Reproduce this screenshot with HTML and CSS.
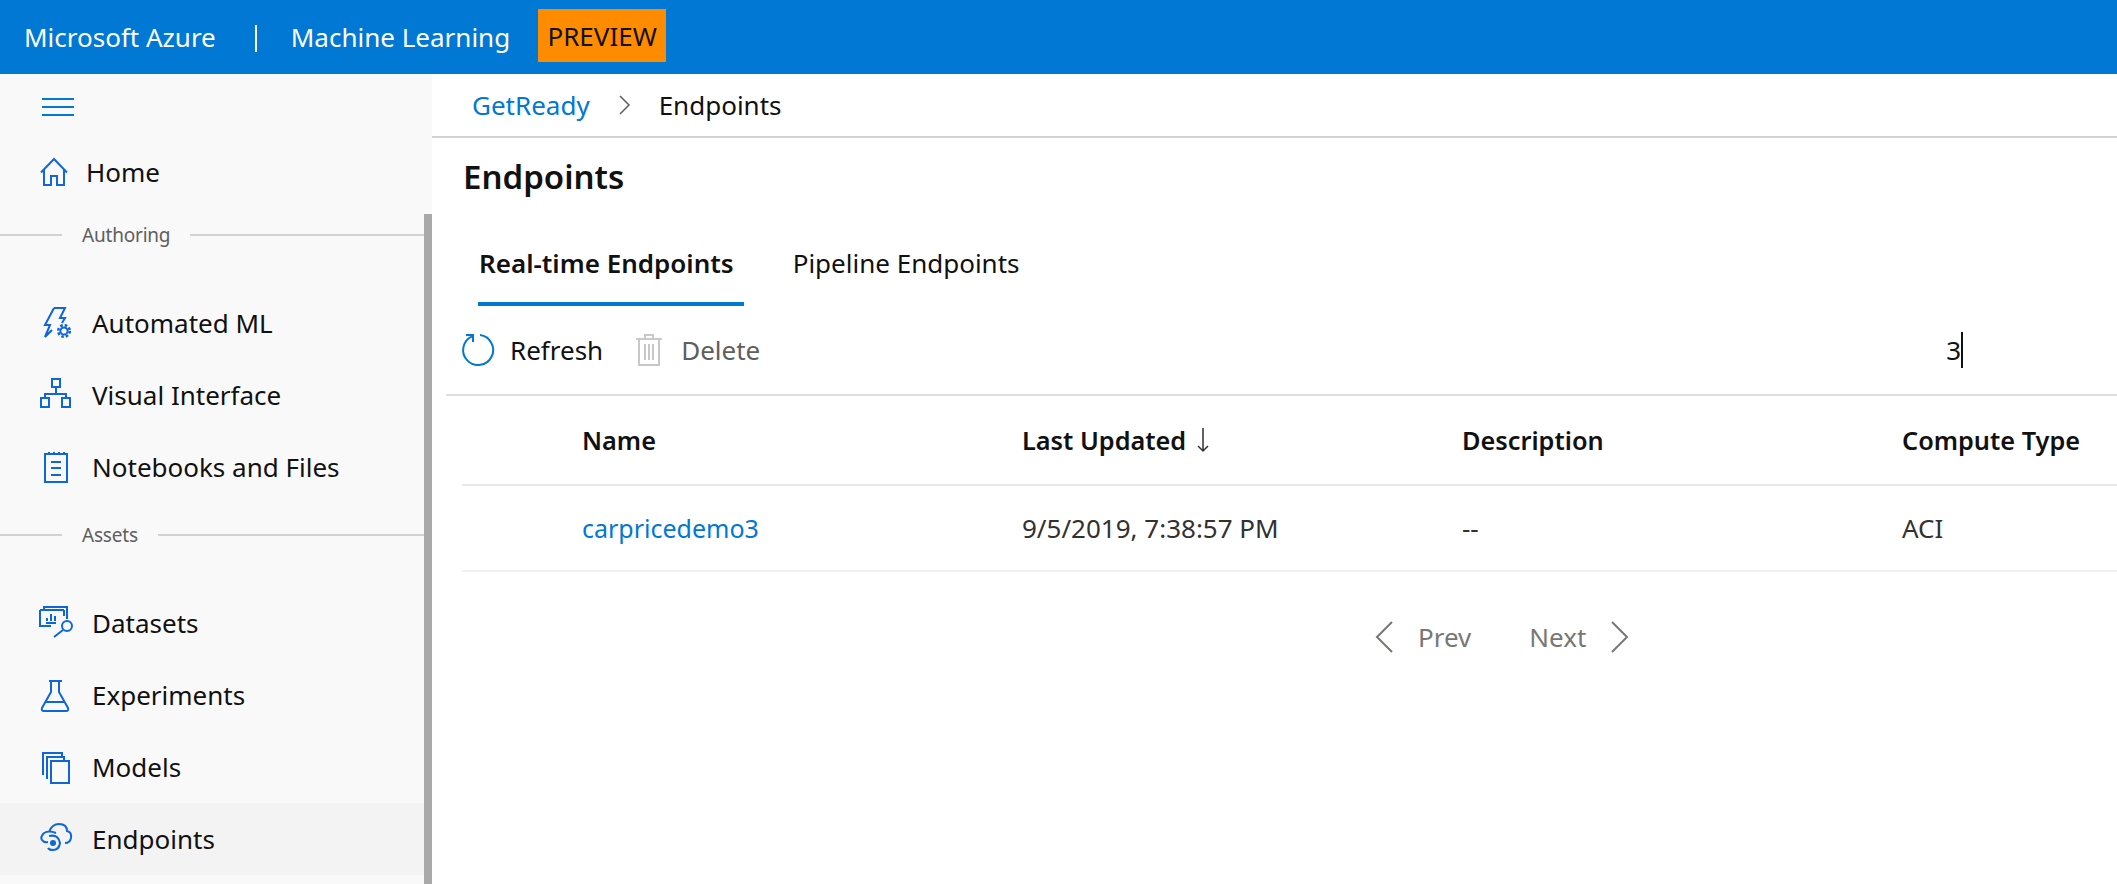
FILE: index.html
```html
<!DOCTYPE html>
<html lang="en">
<head>
    <meta charset="UTF-8">
    <title>Endpoints - Azure Machine Learning</title>
    <link rel="stylesheet" href="styles.css">
</head>
<body>
    <header class="topbar">
        <span class="brand">Microsoft Azure</span>
        <span class="brand-sep"></span>
        <span class="brand">Machine Learning</span>
        <span class="preview">PREVIEW</span>
    </header>

    <div class="shell">
        <nav class="sidebar">
            <div class="nav-scroll">
                <button class="hamburger" aria-label="Menu"><span></span><span></span><span></span></button>
                <a class="nav-item nav-home">
                    <svg class="icon-home" width="28" height="28" viewBox="0 0 28 28"><path d="M1 14.5 14 1l13 13.5M4 11v16h7v-9h6v9h7V11"/></svg>
                    Home
                </a>
                <div class="nav-group"><span>Authoring</span></div>
                <a class="nav-item">
                    <svg width="32" height="32" viewBox="0 0 32 32"><path d="M14 1h11l-5 10h5l-3 5M14 1 5 18h5L5 30l7-7"/><circle cx="24" cy="24" r="3.6"/><circle class="teeth" cx="24" cy="24" r="5.8"/></svg>
                    Automated ML
                </a>
                <a class="nav-item">
                    <svg width="32" height="32" viewBox="0 1 32 32"><path d="M12 1h8v8h-8zM1 20h8v9H1zM22 20h8v9h-8zM16 9v7M5 20v-4h21v4"/></svg>
                    Visual Interface
                </a>
                <a class="nav-item">
                    <svg width="32" height="32" viewBox="0 -1 32 32"><path d="M5 2h22v28H5zM11 10h10M11 16h10M11 23h10M9 0v3M14 0v3M19 0v3M24 0v3"/></svg>
                    Notebooks and Files
                </a>
                <div class="nav-group nav-group-assets"><span>Assets</span></div>
                <a class="nav-item">
                    <svg width="32" height="32" viewBox="0 0 32 32"><path d="M4 3V0h23v12M0 3h24M0 3v16h11M24 3v6M7 14v-3M11 14V7M15 14V9M6 16h10M23 23l-9 7"/><circle cx="27" cy="19" r="5"/></svg>
                    Datasets
                </a>
                <a class="nav-item">
                    <svg width="32" height="32" viewBox="0 -1 32 32"><path d="M9 1h13M11 1v11L2 28q-1 3 2 3h22q3 0 2-3l-9-16V1M6 22h19"/></svg>
                    Experiments
                </a>
                <a class="nav-item">
                    <svg width="32" height="32" viewBox="0 -1 32 32"><path d="M11 9h18v22H11zM7 27V5h17v4M3 23V1h19v4"/></svg>
                    Models
                </a>
                <a class="nav-item nav-item-active">
                    <svg width="32" height="32" viewBox="0 0 32 32"><path d="M16 10Q9 7 4 10 0 14 2 17q2 3 6 2M9 13q9-2 11 7-1 7-7 7-4 0-5-2M9 9q3-8 10-8 8 0 8 7 5 1 4 7-1 5-6 5"/><circle class="dot" cx="13" cy="20" r="3"/></svg>
                    Endpoints
                </a>
            </div>
        </nav>

        <main class="main">
            <div class="crumbs">
                <a class="link">GetReady</a>
                <svg class="crumb-sep" width="12" height="20" viewBox="0 0 12 20"><path d="M1 1l9 9-9 9"/></svg>
                <span>Endpoints</span>
            </div>

            <h1>Endpoints</h1>

            <div class="tabs">
                <div class="tab tab-active">Real-time Endpoints</div>
                <div class="tab">Pipeline Endpoints</div>
            </div>

            <div class="toolbar">
                <button class="tool">
                    <svg class="icon-refresh" width="32" height="32" viewBox="0 0 32 32"><path d="M10 2.3A15 15 0 1 0 18 1.1M4 1h7v7"/></svg>
                    Refresh
                </button>
                <button class="tool tool-off">
                    <svg class="icon-delete" width="26" height="32" viewBox="0 0 26 32"><path d="M0 5h26M3 5v26h20V5M9 5V1h8v4M9 10v16M13 10v16M17 10v16"/></svg>
                    Delete
                </button>
                <div class="search"><span>3</span><i class="caret"></i></div>
            </div>

            <div class="grid-wrap">
                <div class="row row-head">
                    <div class="cell">Name</div>
                    <div class="cell cell-sorted"><span>Last Updated</span><svg class="sort" width="12" height="24" viewBox="0 0 12 24"><path d="M6 0v23M1 18l5 5 5-5"/></svg></div>
                    <div class="cell">Description</div>
                    <div class="cell">Compute Type</div>
                </div>
                <div class="row">
                    <div class="cell"><a class="link link-row">carpricedemo3</a></div>
                    <div class="cell">9/5/2019, 7:38:57 PM</div>
                    <div class="cell">--</div>
                    <div class="cell">ACI</div>
                </div>
            </div>

            <div class="pager">
                <svg width="18" height="32" viewBox="0 0 18 32"><path d="M17 1 2 16l15 15"/></svg>
                <span class="pager-prev">Prev</span>
                <span class="pager-next">Next</span>
                <svg width="18" height="32" viewBox="0 0 18 32"><path d="M1 1l15 15L1 31"/></svg>
            </div>
        </main>
    </div>
</body>
</html>
```

FILE: styles.css
```css
* { box-sizing: border-box; }
html, body { height: 100%; }
body { margin: 0; overflow: hidden; font-family: "Noto Sans", "Open Sans", sans-serif; font-size: 26px; color: #111; background-color: #fff; }
button { font: inherit; background: none; border: none; padding: 0; color: inherit; }
svg { fill: none; stroke: #0f66db; stroke-width: 2; overflow: visible; flex: none; }

.topbar { height: 74px; background-color: #0078d4; color: #fff; display: flex; align-items: center; padding-left: 24px; }
.brand-sep { width: 2px; height: 27px; background-color: #fff; margin: 3px 34px 0 39px; }
.preview { margin-left: 28px; width: 128px; height: 53px; margin-top: -3px; background-color: #ff8c00; color: #111; display: flex; align-items: center; justify-content: center; }

.shell { display: flex; height: 810px; }

.sidebar { width: 432px; background-color: #f9f9f9; display: flex; position: relative; }
.sidebar::after { content: ""; position: absolute; right: 0; top: 140px; bottom: 0; width: 8px; background-color: #a9a9a9; }
.nav-scroll { width: 424px; }
.hamburger { display: flex; flex-direction: column; gap: 6px; width: 32px; height: 62px; margin-left: 42px; justify-content: center; padding-top: 4px; }
.hamburger span { display: block; height: 2px; background-color: #0078d4; }

.nav-item { display: flex; align-items: center; gap: 20px; height: 72px; padding-left: 40px; color: #111; }
.nav-item-active { background-color: #f3f3f3; }
.nav-home { gap: 18px; }
.icon-home { stroke: #1565e0; }
.teeth { stroke-width: 2.6; stroke-dasharray: 2.6 1.95; }
.dot { fill: #0f66db; stroke: none; }

.nav-group { height: 79px; display: flex; align-items: flex-start; font-size: 19px; color: #605e5c; letter-spacing: -0.2px; }
.nav-group span { margin-top: 14px; padding: 0 20px; line-height: 26px; display: flex; align-items: center; flex: none; margin-left: 62px; }
.nav-group::before { content: ""; position: absolute; left: 0; width: 62px; height: 2px; margin-top: 26px; background-color: #d2d2d2; }
.nav-group::after { content: ""; flex: 1; height: 2px; margin-top: 26px; background-color: #d2d2d2; }
.nav-group-assets { height: 84px; }
.nav-group-assets span { margin-top: 19px; }
.nav-group-assets::before, .nav-group-assets::after { margin-top: 31px; }

.main { flex: 1; min-width: 0; }
.link { color: #0078d4; }
.link-row { font-size: 25px; }

.crumbs { height: 64px; border-bottom: 2px solid #d2d2d2; display: flex; align-items: center; padding-left: 40px; }
.crumb-sep { margin: 0 28px 0 29px; stroke: #605e5c; stroke-width: 1.5; }

h1 { margin: 0; padding: 19px 0 0 31px; height: 87px; font-size: 33px; font-weight: 600; line-height: 40px; color: #111; }

.tabs { display: flex; gap: 49px; padding-left: 46px; height: 81px; }
.tab { height: 81px; padding: 0 10px 0 0; line-height: 77px; }
.tab-active { font-weight: 600; border-bottom: 4px solid #0078d4; padding-left: 1px; }

.toolbar { height: 90px; margin-left: 14px; border-bottom: 2px solid #ddd; display: flex; align-items: center; padding: 0 0 0 16px; }
.tool { display: flex; align-items: center; gap: 16px; margin-right: 33px; }
.tool-off { gap: 19px; color: #605e5c; }
.icon-refresh { stroke: #0078d4; }
.icon-delete { stroke: #c8c8c8; }
.search { margin-left: auto; margin-right: 154px; display: flex; align-items: center; }
.caret { display: block; width: 2px; height: 36px; background-color: #111; }

.grid-wrap { margin-left: 30px; }
.row { display: grid; grid-template-columns: 440px 440px 440px 1fr; height: 86px; align-items: center; padding-left: 120px; border-bottom: 2px solid #f0f0f0; color: #323130; }
.row-head { height: 90px; border-bottom-color: #e8e8e8; font-size: 25.3px; font-weight: 600; color: #111; }
.cell-sorted { display: flex; align-items: center; }
.sort { stroke: #323130; stroke-width: 1.5; margin-left: 11px; }

.pager { display: flex; align-items: center; padding: 47px 0 0 943px; color: #797775; }
.pager svg { stroke: #797775; }
.pager-prev { margin-left: 25px; }
.pager-next { margin-left: 58px; margin-right: 25px; }
```
